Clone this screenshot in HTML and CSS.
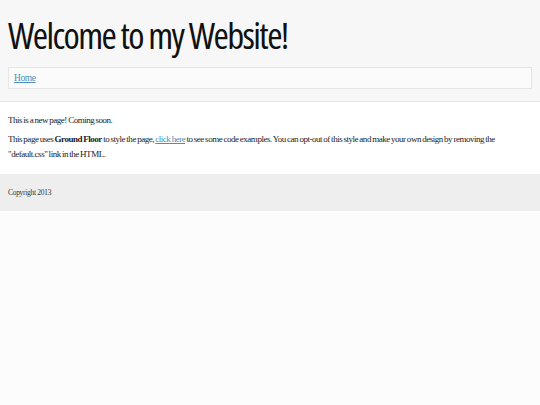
FILE: index.html
```html
<!DOCTYPE html>
<html lang="en">
<head>
<meta charset="utf-8">
<title>Welcome to my Website!</title>
<link rel="stylesheet" href="styles.css">
</head>
<body>
<header class="site-header">
  <h1 class="site-title">Welcome to my Website!</h1>
  <nav class="site-nav">
    <a href="#" class="nav-link">Home</a>
  </nav>
</header>
<main class="content">
  <p class="para">This is a new page! Coming soon.</p>
  <p class="para">This page uses <strong class="em-text">Ground Floor</strong> to style the page, <a href="#" class="text-link">click here</a> to see some code examples. You can opt-out of this style and make your own design by removing the "default.css" link in the HTML.</p>
</main>
<footer class="site-footer">
  <p class="copyright">Copyright 2013</p>
</footer>
</body>
</html>
```
FILE: styles.css
```css
html {
  background: #fcfcfc;
}
body {
  margin: 0;
  font-family: "Liberation Serif", "DejaVu Serif", serif;
  color: #222;
}
.site-header {
  background: #f7f7f7;
  padding: 9px 8px 12px;
  border-bottom: 1px solid #e6e6e6;
}
.site-title {
  margin: 0 0 6px;
  font-family: "Open Sans", "Noto Sans", sans-serif;
  font-weight: 400;
  font-size: 37px;
  font-stretch: 75%;
  letter-spacing: -1.6px;
  line-height: 52px;
  color: #111;
}
.site-nav {
  background: #fbfbfb;
  border: 1px solid #e6e6e6;
  padding: 0 5px;
  height: 20px;
  line-height: 20px;
  font-size: 9.5px;
  letter-spacing: -0.4px;
}
.nav-link,
.text-link {
  color: #4a90b8;
  text-decoration: underline;
}
.content {
  background: #fff;
  padding: 11px 30px 12px 8px;
  font-size: 9px;
  letter-spacing: -0.48px;
  word-spacing: -0.5px;
  line-height: 15px;
}
.para {
  margin: 0 0 4px;
}
.para:last-child {
  margin-bottom: 0;
}
.em-text {
  color: #1a1a1a;
}
.site-footer {
  background: #eeeeee;
  padding: 0 8px;
  height: 37px;
}
.copyright {
  margin: 0;
  line-height: 37px;
  font-size: 7.5px;
  letter-spacing: -0.3px;
  color: #333;
}
```
